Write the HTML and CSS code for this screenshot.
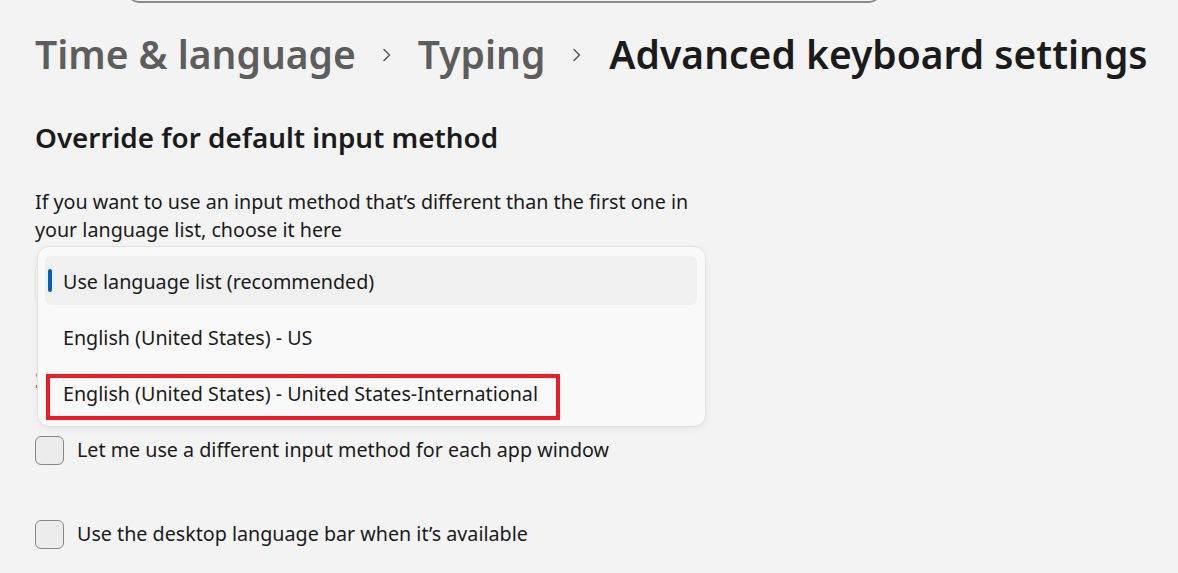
FILE: index.html
```html
<!DOCTYPE html>
<html lang="en">
<head>
<meta charset="utf-8">
<title>Advanced keyboard settings</title>
<link rel="stylesheet" href="styles.css">
</head>
<body>
<div class="page">
  <div class="search"></div>
  <main class="content">
    <nav class="breadcrumb">
      <span class="crumb">Time &amp; language</span>
      <span class="sep first"><svg width="12" height="16" viewBox="0 0 12 16"><path d="M3 2.5 L8.5 8 L3 13.5" fill="none" stroke="#5d5d5d" stroke-width="1.6" stroke-linecap="round" stroke-linejoin="round"/></svg></span>
      <span class="crumb">Typing</span>
      <span class="sep second"><svg width="12" height="16" viewBox="0 0 12 16"><path d="M3 2.5 L8.5 8 L3 13.5" fill="none" stroke="#5d5d5d" stroke-width="1.6" stroke-linecap="round" stroke-linejoin="round"/></svg></span>
      <span class="crumb current">Advanced keyboard settings</span>
    </nav>

    <section class="section">
      <h2 class="heading">Override for default input method</h2>
      <p class="desc">If you want to use an input method that’s different than the first one in your language list, choose it here</p>
      <div class="combo-wrap">
        <div class="combo"></div>
        <div class="popup">
          <div class="item selected"><span class="indicator"></span>Use language list (recommended)</div>
          <div class="item">English (United States) - US</div>
          <div class="item">English (United States) - United States-International</div>
          <div class="annotation"></div>
        </div>
      </div>
    </section>

    <section class="section">
      <h2 class="heading sub">Switching input methods</h2>
      <label class="check-row"><span class="box"></span><span>Let me use a different input method for each app window</span></label>
      <label class="check-row second"><span class="box"></span><span>Use the desktop language bar when it’s available</span></label>
    </section>
  </main>
</div>
</body>
</html>
```

FILE: styles.css
```css
* { box-sizing: border-box; }
html, body { margin: 0; padding: 0; }
body {
  background: #f3f3f3;
  font-family: "Noto Sans", "Open Sans", sans-serif;
  color: #1b1b1b;
  width: 1178px;
  height: 573px;
  overflow: hidden;
}
.page { display: flow-root; }
.search {
  width: 754px;
  height: 40px;
  margin: -37px 0 0 127px;
  border: 1px solid #8b8b8b;
  border-bottom-width: 2px;
  border-radius: 12px;
}
.content { padding-left: 35px; }
.breadcrumb {
  display: flex;
  align-items: center;
  margin-top: 23px;
  height: 56px;
  white-space: nowrap;
}
.crumb {
  font-size: 39px;
  font-weight: 600;
  color: #5d5d5d;
  line-height: 56px;
}
.crumb.current { color: #1b1b1b; }
.sep {
  display: flex;
  align-items: center;
  padding-top: 2px;
}
.sep.first { margin: 0 25px 0 25px; }
.sep.second { margin: 0 26px 0 26px; }
.section { margin: 0; }
.heading {
  margin: 37px 0 0;
  font-size: 27.8px;
  font-weight: 600;
  line-height: 36px;
}
.desc {
  margin: 33px 0 0;
  font-size: 19.7px;
  line-height: 28px;
  width: 680px;
}
.combo-wrap {
  position: relative;
  margin-top: 18px;
}
.combo {
  width: 300px;
  height: 40px;
  background: #fbfbfb;
  border: 1px solid #e5e5e5;
  border-radius: 6px;
}
.popup {
  position: absolute;
  left: 2px;
  top: -16px;
  width: 669px;
  height: 181px;
  background: #f9f9f9;
  border: 1px solid #e2e2e2;
  border-radius: 12px;
  box-shadow: 0 2px 6px rgba(0, 0, 0, 0.06);
  padding: 9px 8px 0 7px;
}
.item {
  position: relative;
  height: 49px;
  margin-bottom: 7px;
  border-radius: 6px;
  padding-left: 18px;
  font-size: 19.7px;
  line-height: 52px;
  color: #1b1b1b;
}
.item.selected { background: #f0f0f0; }
.indicator {
  position: absolute;
  left: 3px;
  top: 13px;
  width: 4px;
  height: 23px;
  border-radius: 2px;
  background: #005fb8;
}
.annotation {
  position: absolute;
  left: 8px;
  top: 127px;
  width: 514px;
  height: 46px;
  border: 4px solid #ec1c24;
}
.heading.sub { margin-top: 58px; color: #1b1b1b; }
.check-row {
  display: flex;
  align-items: center;
  margin-top: 40px;
  font-size: 19.7px;
  line-height: 28px;
  height: 28px;
}
.check-row.second { margin-top: 56px; }
.box {
  width: 29px;
  height: 29px;
  border: 1px solid #878787;
  border-radius: 6px;
  background: #ececec;
  margin-right: 13px;
  flex: none;
}
```
